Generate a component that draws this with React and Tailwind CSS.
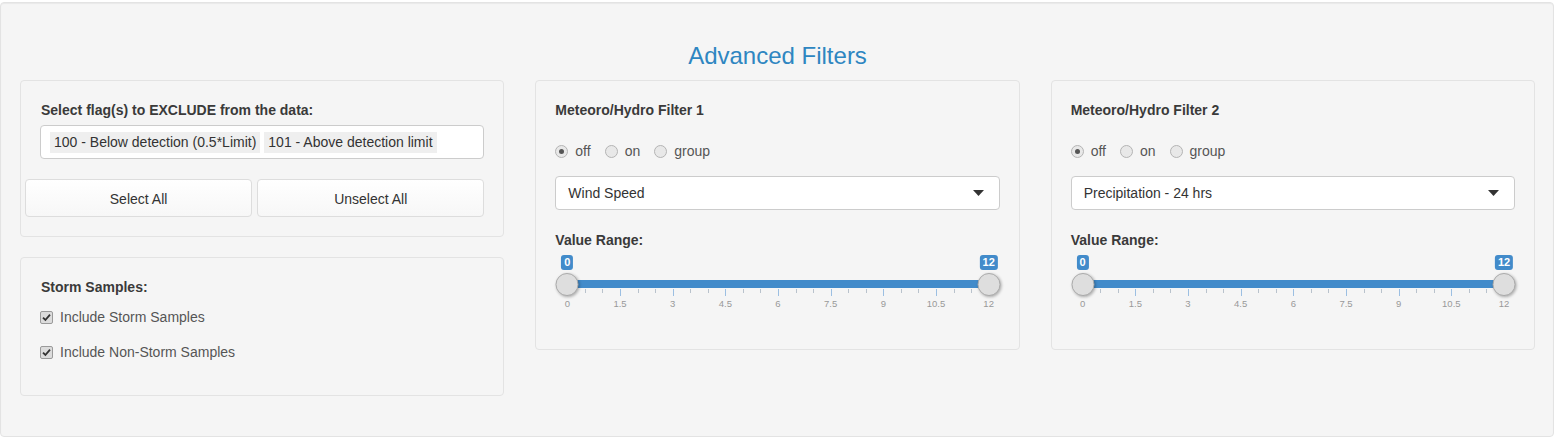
const font = { fontFamily: '"Liberation Sans", Arial, Helvetica, sans-serif' }

function Radio({ checked, label }) {
  return (
    <label className="flex items-center gap-[7px] text-[14px] text-[#555]">
      <span className="w-[13px] h-[13px] rounded-full border border-[#b4b4b4] bg-[#e8e8e8] flex items-center justify-center">
        {checked && <span className="w-[5px] h-[5px] rounded-full bg-[#555]" />}
      </span>
      {label}
    </label>
  )
}

function Check({ label }) {
  return (
    <label className="flex items-center h-5 text-[14px] text-[#555]">
      <span className="w-[13px] h-[13px] rounded-[2px] border border-[#9a9a9a] bg-[#dcdcdc] flex items-center justify-center">
        <svg width="9" height="9" viewBox="0 0 9 9">
          <path d="M1 4.6 L3.4 7 L8 1.6" fill="none" stroke="#333" strokeWidth="1.8" />
        </svg>
      </span>
      <span className="ml-[7px]">{label}</span>
    </label>
  )
}

function Caret() {
  return (
    <svg width="11" height="6" viewBox="0 0 11 6">
      <path d="M0 0 L11 0 L5.5 6 Z" fill="#333" />
    </svg>
  )
}

function RangeSlider() {
  const majors = [0, 1.5, 3, 4.5, 6, 7.5, 9, 10.5, 12]
  const ticks = []
  for (let i = 0; i <= 24; i++) ticks.push(i)
  return (
    <div className="relative h-[60px] w-full">
      <div className="absolute left-[12px] right-[11px] top-0 h-full">
        <div className="absolute left-0 right-0 top-[30px] h-[8px] bg-[#428bca]" />
        {ticks.map((t) => (
          <div
            key={t}
            className={t % 3 === 0 ? 'absolute top-[39px] w-px h-[7px] bg-[#9cbfe2]' : 'absolute top-[39px] w-px h-[4px] bg-[#b9c2cc]'}
            style={{ left: `${(t / 24) * 100}%` }}
          />
        ))}
        {majors.map((m, i) => (
          <span
            key={m}
            className="absolute top-[48px] -translate-x-1/2 text-[9.5px] leading-[11px] text-[#999]"
            style={{ left: `${(i / 8) * 100}%` }}
          >
            {m}
          </span>
        ))}
        <span className="absolute left-0 top-[5px] -translate-x-1/2 bg-[#428bca] text-white text-[11px] leading-[15px] font-bold px-[3px] rounded-[3px]">
          0
        </span>
        <span className="absolute left-full top-[5px] -translate-x-1/2 bg-[#428bca] text-white text-[11px] leading-[15px] font-bold px-[3px] rounded-[3px]">
          12
        </span>
        <span className="absolute left-0 top-[23px] -translate-x-1/2 w-[23px] h-[23px] rounded-full bg-[#dedede] border border-[#ababab] shadow-[1px_1px_3px_rgba(0,0,0,0.3)]" />
        <span className="absolute left-full top-[23px] -translate-x-1/2 w-[23px] h-[23px] rounded-full bg-[#dedede] border border-[#ababab] shadow-[1px_1px_3px_rgba(0,0,0,0.3)]" />
      </div>
    </div>
  )
}

function FilterPanel({ title, value }) {
  return (
    <div className="border border-[#e3e3e3] rounded bg-[#f5f5f5] p-[19px] h-[270px]">
      <p className="text-[14px] leading-5 font-bold text-[#3a3a3a]">{title}</p>
      <div className="mt-[21px] flex items-center gap-[14px] h-5">
        <Radio checked label="off" />
        <Radio label="on" />
        <Radio label="group" />
      </div>
      <div className="mt-[15px] h-[34px] bg-white border border-[#ccc] rounded flex items-center justify-between pl-[12px] pr-[15px] text-[14px] text-[#333]">
        <span>{value}</span>
        <Caret />
      </div>
      <p className="mt-[20px] text-[14px] leading-5 font-bold text-[#3a3a3a]">Value Range:</p>
      <RangeSlider />
    </div>
  )
}

export default function App() {
  return (
    <div className="w-[1555px] h-[437px] bg-white pt-[2px]" style={font}>
      <div className="w-[1554px] h-[435px] border border-[#e3e3e3] rounded bg-[#f5f5f5] shadow-[inset_0_1px_1px_rgba(0,0,0,0.05)] pl-[19px] pr-[18px] pt-[41px]">
        <h2 className="text-center text-[24px] leading-6 text-[#2e86c1]">Advanced Filters</h2>
        <div className="mt-[12px] grid grid-cols-3 gap-[31px] items-start">
          <div className="flex flex-col gap-[20px]">
            <div className="border border-[#e3e3e3] rounded bg-[#f5f5f5] p-[19px]">
              <p className="pl-px text-[14px] leading-5 font-bold text-[#3a3a3a]">Select flag(s) to EXCLUDE from the data:</p>
              <div className="mt-[5px] h-[34px] bg-white border border-[#ccc] rounded flex items-center gap-[4px] pl-[9px] text-[14px] text-[#333]">
                <span className="bg-[#efefef] px-[4px] leading-[21px]">100 - Below detection (0.5*Limit)</span>
                <span className="bg-[#efefef] px-[4px] leading-[21px]">101 - Above detection limit</span>
              </div>
              <div className="mt-[20px] ml-[-15px] grid grid-cols-2 gap-[5px]">
                <button className="h-[38px] pt-[2px] bg-gradient-to-b from-white to-[#f7f7f7] border border-[#ddd] rounded text-[14px] text-[#333]">Select All</button>
                <button className="h-[38px] pt-[2px] bg-gradient-to-b from-white to-[#f7f7f7] border border-[#ddd] rounded text-[14px] text-[#333]">Unselect All</button>
              </div>
            </div>
            <div className="border border-[#e3e3e3] rounded bg-[#f5f5f5] px-[19px] pt-[19px] pb-[33px]">
              <p className="pl-px text-[14px] leading-5 font-bold text-[#3a3a3a]">Storm Samples:</p>
              <div className="mt-[10px] flex flex-col gap-[15px]">
                <Check label="Include Storm Samples" />
                <Check label="Include Non-Storm Samples" />
              </div>
            </div>
          </div>
          <FilterPanel title="Meteoro/Hydro Filter 1" value="Wind Speed" />
          <FilterPanel title="Meteoro/Hydro Filter 2" value="Precipitation - 24 hrs" />
        </div>
      </div>
    </div>
  )
}
